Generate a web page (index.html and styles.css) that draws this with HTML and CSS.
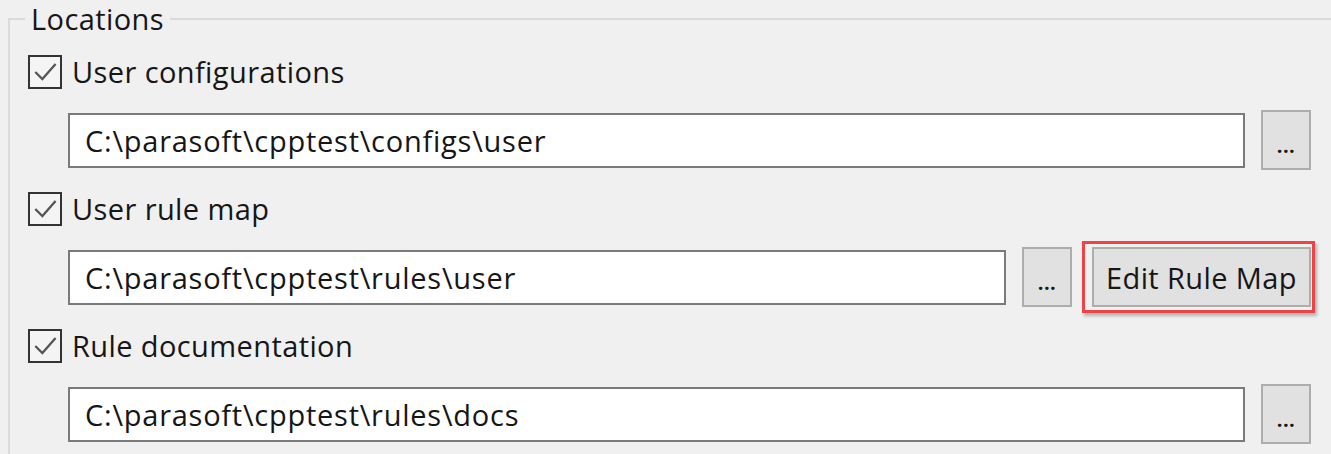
FILE: index.html
```html
<!DOCTYPE html>
<html>
<head>
<meta charset="utf-8">
<link rel="stylesheet" href="styles.css">
</head>
<body>
<fieldset class="group">
  <legend class="group-title">Locations</legend>
  <div class="rows">
    <label class="check-row">
      <span class="checkbox"><svg viewBox="0 0 34 34" width="34" height="34"><path d="M6 17 L14 25 L29 8" fill="none" stroke="#555" stroke-width="2.6"/></svg></span>
      <span class="check-label">User configurations</span>
    </label>
    <div class="path-row">
      <div class="field">C:\parasoft\cpptest\configs\user</div>
      <button class="btn btn-browse">...</button>
    </div>
    <label class="check-row">
      <span class="checkbox"><svg viewBox="0 0 34 34" width="34" height="34"><path d="M6 17 L14 25 L29 8" fill="none" stroke="#555" stroke-width="2.6"/></svg></span>
      <span class="check-label">User rule map</span>
    </label>
    <div class="path-row">
      <div class="field">C:\parasoft\cpptest\rules\user</div>
      <button class="btn btn-browse">...</button>
      <span class="highlight"><button class="btn btn-edit">Edit Rule Map</button></span>
    </div>
    <label class="check-row">
      <span class="checkbox"><svg viewBox="0 0 34 34" width="34" height="34"><path d="M6 17 L14 25 L29 8" fill="none" stroke="#555" stroke-width="2.6"/></svg></span>
      <span class="check-label">Rule documentation</span>
    </label>
    <div class="path-row">
      <div class="field">C:\parasoft\cpptest\rules\docs</div>
      <button class="btn btn-browse">...</button>
    </div>
  </div>
</fieldset>
</body>
</html>
```
FILE: styles.css
```css
html, body {
  margin: 0;
  padding: 0;
  background: #f0f0f0;
  overflow: hidden;
  width: 1331px;
  height: 454px;
}
body {
  font-family: "Open Sans", "Noto Sans", sans-serif;
  font-size: 29px;
  letter-spacing: 0.4px;
  color: #161616;
}
.group {
  margin: 0 0 0 8px;
  padding: 0 0 0 18px;
  border: 2px solid #dadada;
  border-right: none;
  width: 1400px;
  height: 600px;
  box-sizing: border-box;
}
.group-title {
  margin-left: -3px;
  padding: 0 6px 0 6px;
  line-height: 38px;
  font-size: 29px;
}
.rows {
  display: flex;
  flex-direction: column;
  gap: 21px;
  margin-top: 16px;
}
.check-row {
  display: flex;
  align-items: center;
  height: 35px;
  gap: 10px;
}
.checkbox {
  width: 34px;
  height: 34px;
  box-sizing: border-box;
  border: 2px solid #333;
  background: #f4f4f4;
  display: flex;
  align-items: center;
  justify-content: center;
}
.checkbox svg {
  display: block;
  width: 30px;
  height: 30px;
}
.check-label {
  font-size: 29px;
  line-height: 35px;
}
.path-row {
  display: flex;
  align-items: center;
  height: 60px;
  width: 1243px;
  margin-left: 40px;
}
.field {
  flex: 1;
  height: 55px;
  box-sizing: border-box;
  border: 2px solid #7a7a7a;
  background: #fff;
  padding-left: 15px;
  display: flex;
  align-items: center;
  font-size: 29px;
  letter-spacing: 0.75px;
  white-space: nowrap;
}
.btn {
  font-family: inherit;
  font-size: 29px;
  letter-spacing: 0.4px;
  color: #161616;
  background: #e1e1e1;
  border: 2px solid #adadad;
  height: 60px;
  box-sizing: border-box;
  padding: 0;
  margin: 0;
}
.btn-browse {
  width: 50px;
  margin-left: 16px;
  font-size: 20px;
  font-weight: bold;
  padding-top: 10px;
}
.highlight {
  position: relative;
  margin-left: 20px;
  display: block;
}
.highlight::after {
  content: "";
  position: absolute;
  left: -10px;
  top: -6px;
  right: -4px;
  bottom: -6px;
  border: 3px solid #ef4447;
  box-shadow: 2px 3px 3px rgba(0,0,0,0.25);
  pointer-events: none;
}
.btn-edit {
  width: 219px;
  display: block;
}
```
